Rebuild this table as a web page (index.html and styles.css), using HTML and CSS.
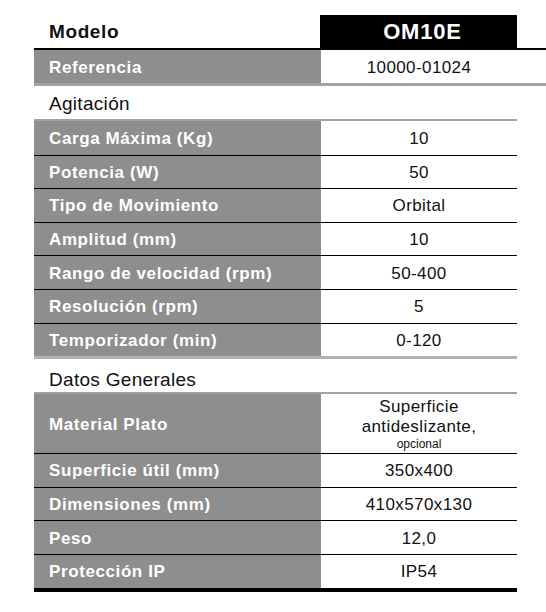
FILE: index.html
```html
<!DOCTYPE html>
<html lang="es">
<head>
<meta charset="utf-8">
<title>OM10E</title>
<link rel="stylesheet" href="styles.css">
</head>
<body>
<div class="sheet">
  <div class="row head">
    <div class="model-label">Modelo</div>
    <div class="model-value">OM10E</div>
  </div>
  <div class="row ref">
    <div class="label">Referencia</div>
    <div class="value">10000-01024</div>
  </div>
  <div class="section">Agitación</div>
  <div class="group group-a">
    <div class="row item"><div class="label">Carga Máxima (Kg)</div><div class="value">10</div></div>
    <div class="row item"><div class="label">Potencia (W)</div><div class="value">50</div></div>
    <div class="row item"><div class="label">Tipo de Movimiento</div><div class="value">Orbital</div></div>
    <div class="row item"><div class="label">Amplitud (mm)</div><div class="value">10</div></div>
    <div class="row item"><div class="label">Rango de velocidad (rpm)</div><div class="value">50-400</div></div>
    <div class="row item"><div class="label">Resolución (rpm)</div><div class="value">5</div></div>
    <div class="row item"><div class="label">Temporizador (min)</div><div class="value">0-120</div></div>
  </div>
  <div class="section section-b">Datos Generales</div>
  <div class="group group-b">
    <div class="row item tall">
      <div class="label">Material Plato</div>
      <div class="value multi"><span>Superficie</span><span>antideslizante,</span><span class="small">opcional</span></div>
    </div>
    <div class="row item"><div class="label">Superficie útil (mm)</div><div class="value">350x400</div></div>
    <div class="row item"><div class="label">Dimensiones (mm)</div><div class="value">410x570x130</div></div>
    <div class="row item"><div class="label">Peso</div><div class="value">12,0</div></div>
    <div class="row item"><div class="label">Protección IP</div><div class="value">IP54</div></div>
  </div>
</div>
</body>
</html>
```

FILE: styles.css
```css
* { box-sizing: border-box; }

html, body {
  margin: 0;
  padding: 0;
  background: #ffffff;
}

body {
  font-family: "Liberation Sans", Arial, sans-serif;
  color: #111111;
}

.sheet {
  width: 546px;
  padding: 15px 0 0 34px;
}

.row {
  display: grid;
  grid-template-columns: 287px 196px;
}

.head {
  height: 35px;
  border-bottom: 2px solid #000000;
}

.model-label {
  font-weight: bold;
  font-size: 19px;
  letter-spacing: 0.6px;
  padding-left: 15px;
  display: flex;
  align-items: center;
}

.model-value {
  background: #000000;
  color: #ffffff;
  font-weight: bold;
  font-size: 22px;
  letter-spacing: 0.8px;
  display: flex;
  align-items: center;
  justify-content: center;
  padding-left: 8px;
  margin-left: -1px;
}

.label {
  background: #8e8e8e;
  color: #ffffff;
  font-weight: bold;
  font-size: 17px;
  letter-spacing: 0.6px;
  padding: 2px 0 0 15px;
  display: flex;
  align-items: center;
}

.value {
  font-size: 17px;
  letter-spacing: 0.4px;
  padding-top: 2px;
  display: flex;
  align-items: center;
  justify-content: center;
}

.ref {
  height: 36px;
  border-bottom: 3px solid #a2a2a2;
}

.section {
  height: 33px;
  font-size: 19px;
  letter-spacing: 0.3px;
  line-height: 22px;
  padding: 7px 0 0 15px;
}

.group {
  width: 483px;
  border-top: 2px solid #a2a2a2;
}

.group-a {
  border-bottom: 3px solid #b2b2b2;
}

.group-b {
  border-bottom: 4px solid #000000;
}

.section-b {
  height: 33px;
  padding-top: 10px;
}

.item {
  height: 33.6px;
  border-top: 1px solid #000000;
}

.item:first-child {
  border-top: none;
}

.tall {
  height: 59px;
}

.multi {
  flex-direction: column;
  line-height: 20px;
  padding-top: 1px;
}

.multi .small {
  font-size: 12px;
  line-height: 15px;
  letter-spacing: 0;
}
```
